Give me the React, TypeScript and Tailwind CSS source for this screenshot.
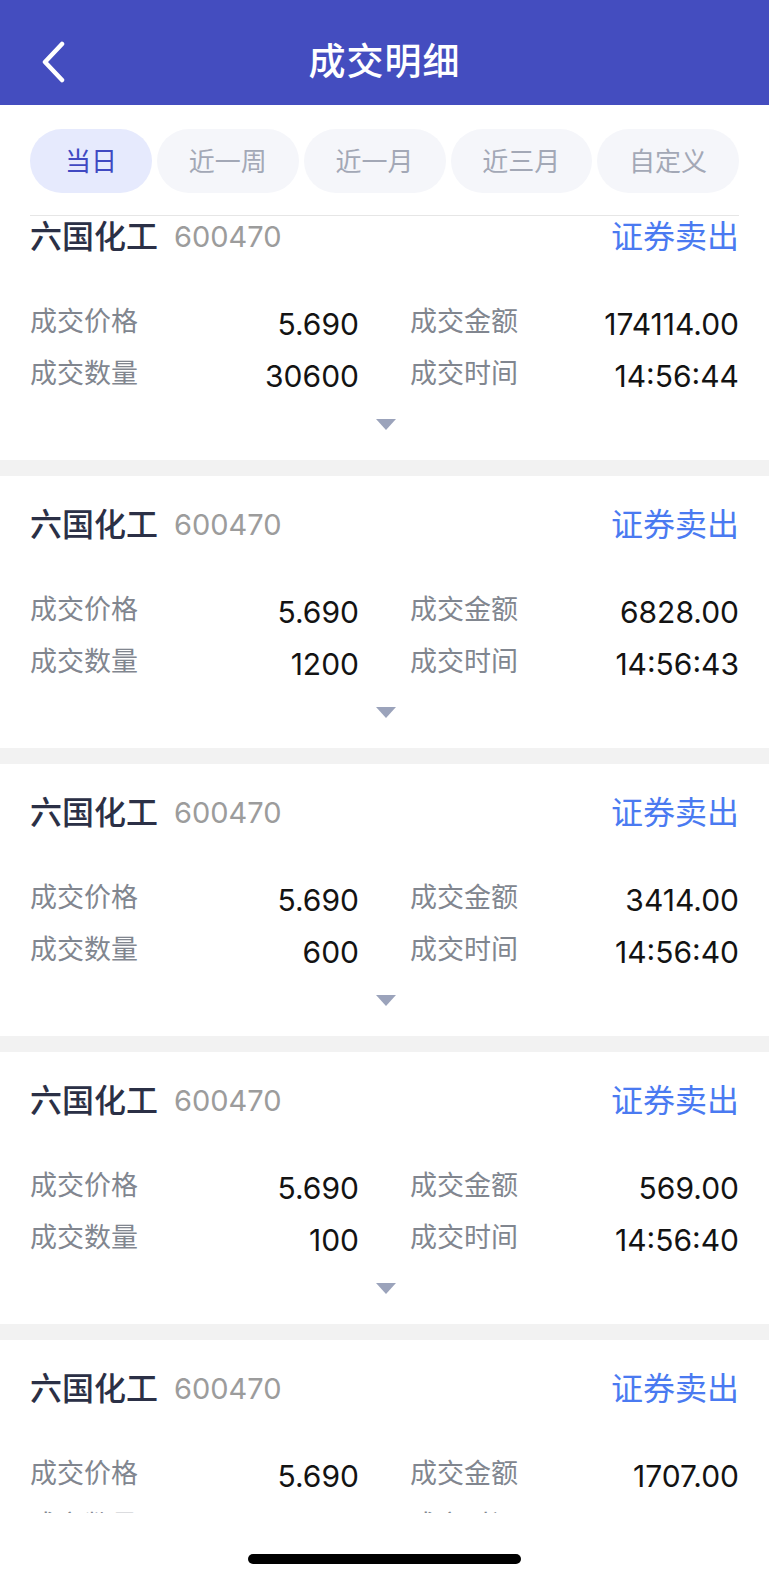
import React from "react";

type Deal = {
  price: string;
  amount: string;
  qty: string;
  time: string;
};

const deals: Deal[] = [
  { price: "5.690", amount: "174114.00", qty: "30600", time: "14:56:44" },
  { price: "5.690", amount: "6828.00", qty: "1200", time: "14:56:43" },
  { price: "5.690", amount: "3414.00", qty: "600", time: "14:56:40" },
  { price: "5.690", amount: "569.00", qty: "100", time: "14:56:40" },
  { price: "5.690", amount: "1707.00", qty: "300", time: "14:56:39" },
];

const tabs = ["当日", "近一周", "近一月", "近三月", "自定义"];

function Field({ label, value }: { label: string; value: string }) {
  return (
    <div className="flex h-[52px] items-center justify-between">
      <span className="text-[27px] text-[#81868f]">{label}</span>
      <span className="mt-[4px] text-[30px] text-[#131313]">{value}</span>
    </div>
  );
}

function DealCard({ deal, first }: { deal: Deal; first?: boolean }) {
  return (
    <div className={`bg-white px-[30px] pb-[30px] ${first ? "pt-[1px]" : "pt-[29px]"}`}>
      <div className="flex h-[40px] items-center justify-between">
        <div className="flex items-center">
          <span className="text-[32px] font-medium text-[#2b3046]">六国化工</span>
          <span className="ml-[16px] text-[29px] text-[#9c9c9c]">600470</span>
        </div>
        <span className="text-[32px] text-[#4a7af1]">证券卖出</span>
      </div>
      <div className="mt-[39px] grid grid-cols-2 gap-x-[51px]">
        <Field label="成交价格" value={deal.price} />
        <Field label="成交金额" value={deal.amount} />
        <Field label="成交数量" value={deal.qty} />
        <Field label="成交时间" value={deal.time} />
      </div>
      <div className="mt-[19px] flex justify-center pl-[2px]">
        <svg width="20" height="11" viewBox="0 0 20 11">
          <polygon points="0,0 20,0 10,11" fill="#9ba3bb" />
        </svg>
      </div>
    </div>
  );
}

export default function App() {
  return (
    <div
      className="flex h-[1580px] w-full flex-col overflow-hidden bg-white"
      style={{ fontFamily: 'Inter, "Noto Sans CJK SC", sans-serif' }}
    >
      <header className="flex h-[105px] shrink-0 flex-col justify-end bg-[#444dbf] pb-[3px]">
        <div className="relative flex h-[80px] items-center justify-center">
          <button type="button" aria-label="Back" className="absolute left-[40px] top-[19px]">
            <svg width="26" height="42" viewBox="0 0 26 42">
              <polyline
                points="22,3 5,21 22,39"
                fill="none"
                stroke="#ffffff"
                strokeWidth="4.5"
                strokeLinecap="round"
                strokeLinejoin="round"
              />
            </svg>
          </button>
          <h1 className="text-[37px] font-medium tracking-[1px] text-white">成交明细</h1>
        </div>
      </header>

      <div className="mx-[30px] flex shrink-0 gap-[5px] border-b border-[#e6e6e6] pt-[24px] pb-[22px]">
        {tabs.map((t, i) => (
          <div
            key={t}
            className={
              i === 0
                ? "flex h-[64px] w-[122px] shrink-0 items-center justify-center rounded-full bg-[#e6eafd] text-[26px] text-[#4049c2]"
                : "flex h-[64px] flex-1 items-center justify-center rounded-full bg-[#f5f6fa] text-[26px] text-[#a3a8b6]"
            }
          >
            {t}
          </div>
        ))}
      </div>

      <div className="flex min-h-0 flex-1 flex-col gap-[16px] overflow-hidden bg-[#f2f2f2]">
        {deals.map((d, i) => (
          <DealCard key={i} deal={d} first={i === 0} />
        ))}
      </div>

      <div className="flex h-[67px] shrink-0 justify-center bg-white pt-[41px]">
        <div className="h-[10px] w-[273px] rounded-full bg-black" />
      </div>
    </div>
  );
}
